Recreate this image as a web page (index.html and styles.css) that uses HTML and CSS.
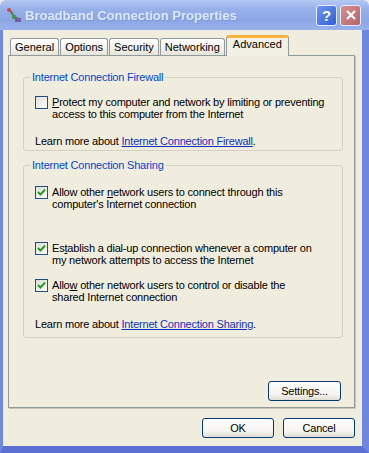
FILE: index.html
```html
<!DOCTYPE html>
<html lang="en">
  <head>
    <meta charset="UTF-8" />
    <title>Broadband Connection Properties</title>
    <link rel="stylesheet" href="styles.css">
  </head>
  <body>
    <div class="window">
      <div class="titlebar">
        <svg class="app-icon" width="16" height="16" viewBox="0 0 16 16">
          <path d="M3 2 L8 9 L13 13" stroke="#5a7a3a" stroke-width="2" fill="none" />
          <circle cx="3" cy="3" r="2" fill="#c84c4c" />
          <circle cx="8" cy="10" r="2.2" fill="#3c9a4c" />
          <rect x="9" y="11" width="6" height="4" fill="#7a5aa8" />
        </svg>
        <span class="title">Broadband Connection Properties</span>
        <div class="caption-buttons">
          <span class="cap-btn help">?</span>
          <span class="cap-btn close">
            <svg width="12" height="12" viewBox="0 0 12 12">
              <path d="M2 2 L10 10 M10 2 L2 10" stroke="#fff" stroke-width="2.2" />
            </svg>
          </span>
        </div>
      </div>

      <div class="frame">
        <div class="tabs">
          <span class="tab">General</span>
          <span class="tab">Options</span>
          <span class="tab">Security</span>
          <span class="tab">Networking</span>
          <span class="tab active">Advanced</span>
        </div>

        <div class="panel">
          <fieldset class="group">
            <legend>Internet Connection Firewall</legend>
            <div class="check">
              <span class="box"></span>
              <span><u>P</u>rotect my computer and network by limiting or preventing<br>access to this computer from the Internet</span>
            </div>
            <p class="learn">Learn more about <a href="#">Internet Connection Firewall</a>.</p>
          </fieldset>

          <fieldset class="group sharing">
            <legend>Internet Connection Sharing</legend>
            <div class="check">
              <span class="box checked">
                <svg width="9" height="9" viewBox="0 0 9 9"><path d="M1 4 L3.5 6.5 L8 1.5" stroke="#21a121" stroke-width="2" fill="none" /></svg>
              </span>
              <span>Allow other <u>n</u>etwork users to connect through this<br>computer's Internet connection</span>
            </div>
            <div class="check dialup">
              <span class="box checked">
                <svg width="9" height="9" viewBox="0 0 9 9"><path d="M1 4 L3.5 6.5 L8 1.5" stroke="#21a121" stroke-width="2" fill="none" /></svg>
              </span>
              <span>Es<u>t</u>ablish a dial-up connection whenever a computer on<br>my network attempts to access the Internet</span>
            </div>
            <div class="check control">
              <span class="box checked">
                <svg width="9" height="9" viewBox="0 0 9 9"><path d="M1 4 L3.5 6.5 L8 1.5" stroke="#21a121" stroke-width="2" fill="none" /></svg>
              </span>
              <span>Allo<u>w</u> other network users to control or disable the<br>shared Internet connection</span>
            </div>
            <p class="learn">Learn more about <a href="#">Internet Connection Sharing</a>.</p>
          </fieldset>

          <button class="btn settings">Settings...</button>
        </div>

        <div class="dialog-actions">
          <button class="btn">OK</button>
          <button class="btn">Cancel</button>
        </div>
      </div>
    </div>
  </body>
</html>
```

FILE: styles.css
```css
body {
  margin: 0;
  font-family: "Liberation Sans", Arial, sans-serif;
  font-size: 11px;
  letter-spacing: -0.2px;
  color: #000;
  background-color: #f0edde;
}

.window {
  width: 369px;
  height: 453px;
  display: flex;
  flex-direction: column;
}

.titlebar {
  height: 30px;
  display: flex;
  align-items: center;
  padding: 0 8px 0 6px;
  box-sizing: border-box;
  background: linear-gradient(#b4c9f3, #97b0ea 30%, #8ca7e6 70%, #9ab2eb);
  border-radius: 6px 6px 0 0;
}

.app-icon {
  margin-right: 3px;
}

.title {
  flex: 1;
  font-weight: bold;
  font-size: 13px;
  letter-spacing: 0;
  color: #dde7fa;
  text-shadow: 1px 1px 0 #7d96d8;
}

.caption-buttons {
  display: flex;
  gap: 3px;
}

.cap-btn {
  width: 19px;
  height: 19px;
  border: 1px solid #e4ebfb;
  border-radius: 3px;
  display: flex;
  align-items: center;
  justify-content: center;
  color: #fff;
  font-weight: bold;
  font-size: 15px;
}

.help {
  background: linear-gradient(135deg, #6f95f0, #2f5fd8);
}

.close {
  background: linear-gradient(135deg, #d49090, #b86464);
}

.frame {
  flex: 1;
  display: flex;
  flex-direction: column;
  border-left: 3px solid #7088e0;
  border-right: 7px solid #6f86df;
  border-bottom: 7px solid #5c70d4;
  padding: 5px 7px 8px 5px;
}

.tabs {
  height: 20px;
  display: flex;
  align-items: flex-end;
  padding-left: 2px;
  letter-spacing: 0;
}

.tab {
  height: 16px;
  line-height: 16px;
  padding: 0 4px;
  margin-right: 1px;
  border: 1px solid #919b9c;
  border-bottom: none;
  border-radius: 3px 3px 0 0;
  background: linear-gradient(#ffffff, #f3f2ec 60%, #e6e4d8);
}

.tab.active {
  position: relative;
  z-index: 1;
  height: 18px;
  line-height: 13px;
  margin-bottom: -1px;
  padding: 0 6px;
  border-top: 3px solid #f8b33c;
  background: #f3f1e6;
}

.panel {
  height: 353px;
  box-sizing: border-box;
  display: flex;
  flex-direction: column;
  padding: 0 11px 6px 14px;
  border: 1px solid #919b9c;
  box-shadow: 1px 1px 0 #c9c7ba;
}

.group {
  margin: 15px 0 0;
  padding: 12px 6px 3px 11px;
  border: 1px solid #d3d1c2;
  border-radius: 3px;
}

.group legend {
  margin-left: -5px;
  padding: 0 2px;
  line-height: 13px;
  color: #0046d5;
}

.sharing {
  margin-top: 8px;
  padding-top: 14px;
  padding-bottom: 7px;
}

.check {
  display: flex;
  align-items: flex-start;
  gap: 4px;
  line-height: 12px;
  white-space: nowrap;
}

.dialup {
  margin-top: 32px;
}

.control {
  margin-top: 13px;
}

.box {
  width: 11px;
  height: 11px;
  border: 1px solid #1c5180;
  background: linear-gradient(135deg, #dcdcd7, #ffffff);
  display: flex;
  align-items: center;
  justify-content: center;
  flex-shrink: 0;
}

.learn {
  margin: 15px 0 0;
  line-height: 12px;
}

.learn a {
  color: #1030c0;
}

.btn {
  height: 20px;
  width: 72px;
  padding: 0;
  font-family: inherit;
  font-size: 11px;
  letter-spacing: inherit;
  color: #000;
  border: 1px solid #003c74;
  border-radius: 3px;
  background: linear-gradient(#ffffff, #f4f3ee 70%, #dedcd2);
}

.settings {
  width: 73px;
  margin-top: auto;
  margin-right: 2px;
  align-self: flex-end;
}

.dialog-actions {
  display: flex;
  justify-content: flex-end;
  gap: 9px;
  margin-top: 10px;
}
```
